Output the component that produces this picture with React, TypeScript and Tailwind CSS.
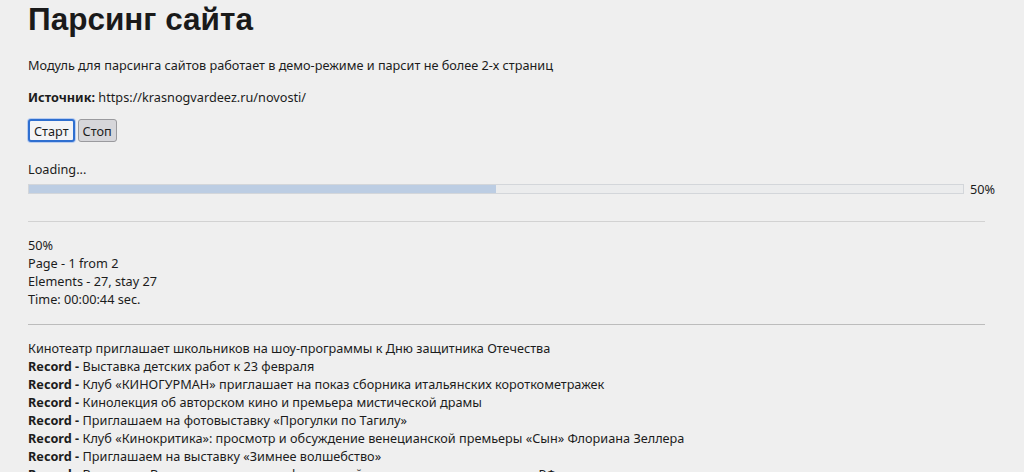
const STATS = ['50%', 'Page - 1 from 2', 'Elements - 27, stay 27', 'Time: 00:00:44 sec.'];

const RECORDS = [
  'Выставка детских работ к 23 февраля',
  'Клуб «КИНОГУРМАН» приглашает на показ сборника итальянских короткометражек',
  'Кинолекция об авторском кино и премьера мистической драмы',
  'Приглашаем на фотовыставку «Прогулки по Тагилу»',
  'Клуб «Кинокритика»: просмотр и обсуждение венецианской премьеры «Сын» Флориана Зеллера',
  'Приглашаем на выставку «Зимнее волшебство»',
  'Выставка «Выдающиеся деятели физической культуры и спорта» в музее РФ',
];

export default function App() {
  const progress = 50;

  return (
    <div className="h-[472px] overflow-hidden bg-[#efefef] pl-[28px] pr-[39px] text-[#1c1c1c] font-['Noto_Sans',sans-serif] text-[12.7px] leading-[18px]">
      <h1 className="pt-[2px] font-['Liberation_Sans',Arial,sans-serif] text-[31.5px] leading-[35px] font-bold text-[#1a1a1a]">
        Парсинг сайта
      </h1>

      <p className="mt-[19px]">Модуль для парсинга сайтов работает в демо-режиме и парсит не более 2-х страниц</p>

      <p className="mt-[14px]">
        <b>Источник:</b> https://krasnogvardeez.ru/novosti/
      </p>

      {/* Controls */}
      <div className="mt-[13px] flex gap-[3px]">
        <button className="h-[23px] px-[4px] rounded-[3px] border-2 border-[#2f6fd0] bg-[#f4f4f6] shadow-[0_0_0_1px_#b9cdf0]">
          Старт
        </button>
        <button className="h-[23px] px-[4px] rounded-[3px] border border-[#9a9a9e] bg-[#d6d6da]">
          Стоп
        </button>
      </div>

      {/* Progress */}
      <div className="mt-[18px]">Loading...</div>
      <div className="mt-[4px] flex items-center gap-[6px]">
        <div className="flex-1 h-[10px] border border-[#d3d6da] bg-[#ebeced]">
          <div className="h-full bg-[#bccde3]" style={{ width: `${progress}%` }} />
        </div>
        <span className="w-[22px] -mr-[7px] leading-[14px]">{progress}%</span>
      </div>

      <hr className="mt-[25px] border-t border-[#d2d2d2]" />

      <div className="mt-[14px]">
        {STATS.map((s) => (
          <div key={s}>{s}</div>
        ))}
      </div>

      <hr className="mt-[16px] border-t border-[#bcbcbc]" />

      <div className="mt-[14px]">
        <div>Кинотеатр приглашает школьников на шоу-программы к Дню защитника Отечества</div>
        {RECORDS.map((r) => (
          <div key={r}>
            <b>Record -</b> {r}
          </div>
        ))}
      </div>
    </div>
  );
}
